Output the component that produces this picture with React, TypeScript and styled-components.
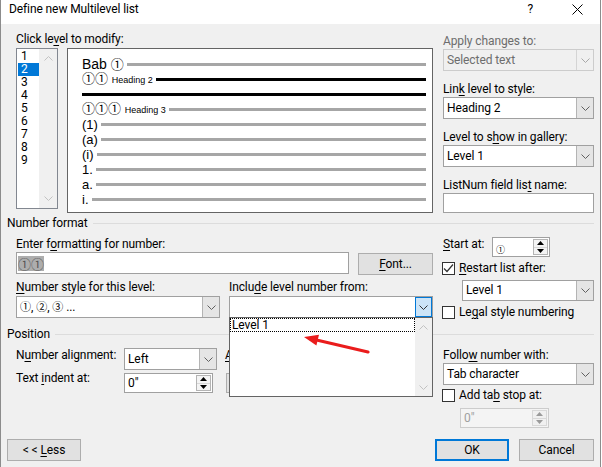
import styled, { createGlobalStyle } from 'styled-components'

const UI_FONT = 'Roboto, "Liberation Sans", Arial, sans-serif'
const DOC_FONT = '"Liberation Sans", Arial, sans-serif'
const SYM_FONT = '"Noto Sans CJK JP", "DejaVu Sans", sans-serif'

const GlobalStyle = createGlobalStyle`
	html, body {
		margin: 0;
		padding: 0;
		background: #ffffff;
	}
	body {
		font-family: ${UI_FONT};
		font-size: 12px;
		letter-spacing: -0.1px;
		color: #000;
	}
	* {
		box-sizing: border-box;
	}
`

// little drawings used by the controls
const Chevron = ({ up, color = '#606060' }: { up?: boolean; color?: string }) => (
	<svg width="9" height="5" viewBox="0 0 9 5">
		<path
			d={up ? 'M0.5 4.5 L4.5 0.5 L8.5 4.5' : 'M0.5 0.5 L4.5 4.5 L8.5 0.5'}
			fill="none"
			stroke={color}
			strokeWidth="1"
		/>
	</svg>
)

const Tri = ({ up, color = '#000' }: { up?: boolean; color?: string }) => (
	<svg width="7" height="4" viewBox="0 0 7 4">
		<path d={up ? 'M0 4 L3.5 0 L7 4 Z' : 'M0 0 L3.5 4 L7 0 Z'} fill={color} />
	</svg>
)

const Tick = () => (
	<svg width="11" height="11" viewBox="0 0 11 11">
		<path d="M1 5.5 L4 8.5 L10 1.5" fill="none" stroke="#333" strokeWidth="1.2" />
	</svg>
)

const CloseGlyph = () => (
	<CloseSvg width="11" height="11" viewBox="0 0 11 11">
		<path d="M0.5 0.5 L10.5 10.5 M10.5 0.5 L0.5 10.5" stroke="#000" strokeWidth="1" />
	</CloseSvg>
)

const levels = ['1', '2', '3', '4', '5', '6', '7', '8', '9']

const GRAY_RULE = '#a6a6a6'

const App = () => {
	return (
		<>
			<GlobalStyle />
			<Window>
				<TitleBar>
					<Title>Define new Multilevel list</Title>
					<Help>?</Help>
					<CloseGlyph />
				</TitleBar>
				<Body>
					<Section>
						<LeftPart>
							<Label>
								Click le<Key>v</Key>el to modify:
							</Label>
							<LevelRow>
								<LevelList>
									<LevelItems>
										{levels.map((l) => (
											<LevelItem key={l} $selected={l === '2'}>
												{l}
											</LevelItem>
										))}
									</LevelItems>
									<LevelScroll>
										<Chevron up color="#c2c2c2" />
										<Chevron color="#c2c2c2" />
									</LevelScroll>
								</LevelList>
								<Preview>
									<PreviewRow>
										<PreviewText $size={14}>
											Bab <Sym $size={13}>①</Sym>
										</PreviewText>
										<Rule $color={GRAY_RULE} />
									</PreviewRow>
									<PreviewRow>
										<PreviewText>
											<Sym $size={13}>①①</Sym> <Small>Heading 2</Small>
										</PreviewText>
										<Rule $color="#000" />
									</PreviewRow>
									<PreviewRow>
										<Rule $color="#000" $flush />
									</PreviewRow>
									<PreviewRow>
										<PreviewText>
											<Sym $size={13}>①①①</Sym> <Small>Heading 3</Small>
										</PreviewText>
										<Rule $color={GRAY_RULE} />
									</PreviewRow>
									{['(1)', '(a)', '(i)', '1.', 'a.', 'i.'].map((t) => (
										<PreviewRow key={t}>
											<PreviewText>{t}</PreviewText>
											<Rule $color={GRAY_RULE} />
										</PreviewRow>
									))}
								</Preview>
							</LevelRow>
						</LeftPart>
						<RightColumn $top={2} $gap={11}>
							<Field>
								<Label $disabled>Apply changes to:</Label>
								<ComboBox $disabled>
									<ComboText>Selected text</ComboText>
									<ComboButton $disabled>
										<Chevron color="#a8a8a8" />
									</ComboButton>
								</ComboBox>
							</Field>
							<Field>
								<Label>
									Lin<Key>k</Key> level to style:
								</Label>
								<ComboBox>
									<ComboText>Heading 2</ComboText>
									<ComboButton>
										<Chevron />
									</ComboButton>
								</ComboBox>
							</Field>
							<Field>
								<Label>
									Level to s<Key>h</Key>ow in gallery:
								</Label>
								<ComboBox>
									<ComboText>Level 1</ComboText>
									<ComboButton>
										<Chevron />
									</ComboButton>
								</ComboBox>
							</Field>
							<Field>
								<Label>
									ListNum field lis<Key>t</Key> name:
								</Label>
								<TextBox $h={20} />
							</Field>
						</RightColumn>
					</Section>

					<GroupHeader $top={3}>
						<GroupTitle>Number format</GroupTitle>
						<GroupLine />
					</GroupHeader>

					<Section $top={6}>
						<LeftPart>
							<Label>
								Enter f<Key>o</Key>rmatting for number:
							</Label>
							<InlineRow $gap={9}>
								<TextBox $w={333}>
									<Selected>
										<Sym $size={13}>①①</Sym>
									</Selected>
								</TextBox>
								<PushButton $w={75} $top={1}>
									<Key>F</Key>ont...
								</PushButton>
							</InlineRow>
							<InlineRow $gap={9} $top={5}>
								<Field $w={204}>
									<Label>
										<Key>N</Key>umber style for this level:
									</Label>
									<ComboBox $top={1}>
										<ComboText>
											<Sym $size={11}>①</Sym>, <Sym $size={11}>②</Sym>,{' '}
											<Sym $size={11}>③</Sym> ...
										</ComboText>
										<ComboButton>
											<Chevron />
										</ComboButton>
									</ComboBox>
								</Field>
								<Field $w={204}>
									<Label>
										Inclu<Key>d</Key>e level number from:
									</Label>
									<ComboAnchor>
										<ComboBox $top={1}>
											<ComboText />
											<ComboButton $active>
												<Chevron color="#333" />
											</ComboButton>
										</ComboBox>
										<DropList>
											<DropItems>
												<DropItem>Level 1</DropItem>
											</DropItems>
											<DropScroll>
												<Chevron up color="#c2c2c2" />
												<Chevron color="#c2c2c2" />
											</DropScroll>
											<ArrowSvg width="204" height="80" viewBox="0 0 204 80">
												<path
													d="M139 35 L88.6 23.2"
													stroke="#ea1c1c"
													strokeWidth="3"
													strokeLinecap="round"
												/>
												<path d="M75 20 L90 17.8 L87.4 28.6 Z" fill="#ea1c1c" />
											</ArrowSvg>
										</DropList>
									</ComboAnchor>
								</Field>
							</InlineRow>
						</LeftPart>
						<RightColumn>
							<InlineRow>
								<RowLabel $w={49}>
									<Key>S</Key>tart at:
								</RowLabel>
								<SpinBox $w={58}>
									<SpinValue $low>
										<Sym $size={9}>①</Sym>
									</SpinValue>
									<SpinButtons>
										<SpinHalf>
											<Tri up />
										</SpinHalf>
										<SpinHalf>
											<Tri />
										</SpinHalf>
									</SpinButtons>
								</SpinBox>
							</InlineRow>
							<CheckRow $top={5}>
								<CheckBox>
									<Tick />
								</CheckBox>
								<CheckLabel>
									<Key>R</Key>estart list after:
								</CheckLabel>
							</CheckRow>
							<ComboBox $w={132} $h={21} $top={5} $left={19}>
								<ComboText>Level 1</ComboText>
								<ComboButton>
									<Chevron />
								</ComboButton>
							</ComboBox>
							<CheckRow $top={5}>
								<CheckBox />
								<CheckLabel>
									Le<Key>g</Key>al style numbering
								</CheckLabel>
							</CheckRow>
						</RightColumn>
					</Section>

					<GroupHeader $top={8}>
						<GroupTitle>Position</GroupTitle>
						<GroupLine />
					</GroupHeader>

					<Section $top={6}>
						<LeftPart>
							<InlineRow>
								<RowLabel $w={108}>
									N<Key>u</Key>mber alignment:
								</RowLabel>
								<ComboBox $w={93}>
									<ComboText>Left</ComboText>
									<ComboButton>
										<Chevron />
									</ComboButton>
								</ComboBox>
								<RowLabel $left={8} $w={70}>
									<Key>A</Key>ligned at:
								</RowLabel>
								<TextBox $w={89} $h={20}>
									<SpinValue>0"</SpinValue>
								</TextBox>
							</InlineRow>
							<InlineRow $top={3}>
								<RowLabel $w={108} $shift={-2}>
									Text <Key>i</Key>ndent at:
								</RowLabel>
								<SpinBox $w={89}>
									<SpinValue>0"</SpinValue>
									<SpinButtons>
										<SpinHalf>
											<Tri up />
										</SpinHalf>
										<SpinHalf>
											<Tri />
										</SpinHalf>
									</SpinButtons>
								</SpinBox>
								<PushButton $w={130} $h={20} $left={13}>
									Set for All Levels...
								</PushButton>
							</InlineRow>
						</LeftPart>
						<RightColumn>
							<Label>
								Follo<Key>w</Key> number with:
							</Label>
							<ComboBox>
								<ComboText>Tab character</ComboText>
								<ComboButton>
									<Chevron />
								</ComboButton>
							</ComboBox>
							<CheckRow $top={4}>
								<CheckBox />
								<CheckLabel>
									Add ta<Key>b</Key> stop at:
								</CheckLabel>
							</CheckRow>
							<SpinBox $w={89} $top={6} $left={17} $disabled>
								<SpinValue>0"</SpinValue>
								<SpinButtons $disabled>
									<SpinHalf $disabled>
										<Tri up color="#9a9a9a" />
									</SpinHalf>
									<SpinHalf $disabled>
										<Tri color="#9a9a9a" />
									</SpinHalf>
								</SpinButtons>
							</SpinBox>
						</RightColumn>
					</Section>

					<Footer>
						<PushButton $w={74}>
							&lt; &lt; <Key>L</Key>ess
						</PushButton>
						<FooterSpacer />
						<PushButton $w={74} $default>
							OK
						</PushButton>
						<PushButton $w={75}>Cancel</PushButton>
					</Footer>
				</Body>
			</Window>
		</>
	)
}

export default App

const Window = styled.div`
	position: relative;
	width: 601px;
	height: 467px;
	border-left: 1px solid #8c8c8c;
	border-right: 1px solid #8c8c8c;
	background: #f0f0f0;
	overflow: hidden;
`

const TitleBar = styled.div`
	display: flex;
	align-items: flex-start;
	height: 24px;
	padding: 2px 17px 0 8px;
	background: #ffffff;
`

const Title = styled.div`
	flex: 1;
	line-height: 15px;
	white-space: nowrap;
`

const Help = styled.div`
	line-height: 15px;
	margin-right: 39px;
`

const CloseSvg = styled.svg`
	margin-top: 2px;
`

const Body = styled.div`
	display: flex;
	flex-direction: column;
	padding: 8px 6px 0 6px;
`

const Section = styled.div<{ $top?: number }>`
	display: flex;
	gap: 10px;
	margin-top: ${(p) => p.$top ?? 0}px;
`

const LeftPart = styled.div`
	display: flex;
	flex-direction: column;
	width: 417px;
	margin-left: 9px;
`

const RightColumn = styled.div<{ $top?: number; $gap?: number }>`
	display: flex;
	flex-direction: column;
	align-items: flex-start;
	width: 151px;
	padding-top: ${(p) => p.$top ?? 0}px;
	gap: ${(p) => p.$gap ?? 0}px;

	& > * {
		flex: none;
	}
`

const Field = styled.div<{ $w?: number }>`
	display: flex;
	flex-direction: column;
	width: ${(p) => (p.$w ? `${p.$w}px` : '100%')};
`

const Label = styled.div<{ $disabled?: boolean }>`
	height: 15px;
	line-height: 15px;
	white-space: nowrap;
	color: ${(p) => (p.$disabled ? '#6d6d6d' : '#000')};
`

const RowLabel = styled.div<{ $w: number; $left?: number; $shift?: number }>`
	flex: none;
	width: ${(p) => p.$w}px;
	margin-left: ${(p) => p.$left ?? 0}px;
	margin-top: ${(p) => p.$shift ?? 0}px;
	line-height: 15px;
	white-space: nowrap;
`

const Key = styled.span`
	text-decoration: underline;
	text-underline-offset: 2px;
`

const Sym = styled.span<{ $size: number }>`
	display: inline-block;
	font-family: ${SYM_FONT};
	font-size: ${(p) => p.$size}px;
	line-height: 1;
	letter-spacing: 0;
`

const InlineRow = styled.div<{ $gap?: number; $top?: number }>`
	display: flex;
	align-items: flex-start;
	gap: ${(p) => p.$gap ?? 0}px;
	margin-top: ${(p) => p.$top ?? 0}px;
`

const LevelRow = styled.div`
	display: flex;
	align-items: flex-start;
	gap: 9px;
	margin-top: 1px;
`

const LevelList = styled.div`
	display: flex;
	width: 42px;
	height: 161px;
	border: 1px solid #828790;
	background: #ffffff;
`

const LevelItems = styled.div`
	width: 22px;
	padding: 1px 0 0 1px;
`

const LevelItem = styled.div<{ $selected?: boolean }>`
	height: 13px;
	line-height: 13px;
	padding-left: 3px;
	background: ${(p) => (p.$selected ? '#0078d7' : 'transparent')};
	color: ${(p) => (p.$selected ? '#ffffff' : '#000')};
`

const LevelScroll = styled.div`
	display: flex;
	flex-direction: column;
	align-items: center;
	justify-content: space-between;
	width: 18px;
	padding: 7px 0;
	background: #f0f0f0;
`

const Preview = styled.div`
	display: flex;
	flex-direction: column;
	width: 366px;
	height: 165px;
	padding: 8px 6px 0 14px;
	border: 1px solid #646464;
	background: #ffffff;
	font-family: ${DOC_FONT};
	font-size: 13px;
	letter-spacing: 0;
`

const PreviewRow = styled.div`
	display: flex;
	align-items: center;
	height: 15px;
`

const PreviewText = styled.div<{ $size?: number }>`
	white-space: nowrap;
	font-size: ${(p) => p.$size ?? 13}px;
	line-height: 15px;
`

const Small = styled.span`
	font-size: 9px;
`

const Rule = styled.div<{ $color: string; $flush?: boolean }>`
	flex: 1;
	height: 3px;
	margin-left: ${(p) => (p.$flush ? 0 : 3)}px;
	background: ${(p) => p.$color};
`

const ComboBox = styled.div<{
	$w?: number
	$h?: number
	$top?: number
	$left?: number
	$disabled?: boolean
}>`
	display: flex;
	width: ${(p) => (p.$w ? `${p.$w}px` : '100%')};
	height: ${(p) => p.$h ?? 22}px;
	margin-top: ${(p) => p.$top ?? 0}px;
	margin-left: ${(p) => p.$left ?? 0}px;
	border: 1px solid ${(p) => (p.$disabled ? '#cccccc' : '#a0a0a0')};
	background: ${(p) => (p.$disabled ? '#f0f0f0' : '#ffffff')};
	color: ${(p) => (p.$disabled ? '#6d6d6d' : '#000')};
`

const ComboText = styled.div`
	flex: 1;
	align-self: center;
	padding-left: 3px;
	line-height: 15px;
	white-space: nowrap;
`

const ComboButton = styled.div<{ $active?: boolean; $disabled?: boolean }>`
	display: flex;
	align-items: center;
	justify-content: center;
	width: 17px;
	border: ${(p) => (p.$active ? '1px solid #0078d7' : 'none')};
	border-left: 1px solid
		${(p) => (p.$active ? '#0078d7' : p.$disabled ? '#d4d4d4' : '#b4b4b4')};
	background: ${(p) => (p.$active ? '#cce4f7' : p.$disabled ? '#f0f0f0' : '#e5e5e5')};
`

const ComboAnchor = styled.div`
	position: relative;
`

const DropList = styled.div`
	position: absolute;
	top: calc(100% - 1px);
	left: 0;
	z-index: 5;
	display: flex;
	width: 204px;
	height: 80px;
	border: 1px solid #646464;
	background: #ffffff;
`

const DropItems = styled.div`
	flex: 1;
`

const DropItem = styled.div`
	height: 14px;
	line-height: 12px;
	padding-left: 1px;
	border: 1px dotted #000;
`

const DropScroll = styled.div`
	display: flex;
	flex-direction: column;
	align-items: center;
	justify-content: space-between;
	width: 17px;
	padding: 7px 0 6px;
	background: #f0f0f0;
`

const ArrowSvg = styled.svg`
	position: absolute;
	left: -1px;
	top: -1px;
	pointer-events: none;
`

const TextBox = styled.div<{ $w?: number; $h?: number }>`
	display: flex;
	align-items: center;
	width: ${(p) => (p.$w ? `${p.$w}px` : '100%')};
	height: ${(p) => p.$h ?? 22}px;
	padding-left: 1px;
	border: 1px solid #a0a0a0;
	background: #ffffff;
`

const Selected = styled.span`
	display: inline-flex;
	align-items: center;
	height: 15px;
	background: #adadad;
	color: #555555;
`

const PushButton = styled.div<{
	$w: number
	$h?: number
	$top?: number
	$left?: number
	$default?: boolean
}>`
	flex: none;
	width: ${(p) => p.$w}px;
	height: ${(p) => p.$h ?? 22}px;
	margin-top: ${(p) => p.$top ?? 0}px;
	margin-left: ${(p) => p.$left ?? 0}px;
	border: ${(p) => (p.$default ? '2px solid #0078d7' : '1px solid #adadad')};
	background: #e1e1e1;
	text-align: center;
	line-height: ${(p) => (p.$h ?? 22) - (p.$default ? 4 : 2)}px;
	white-space: nowrap;
`

const SpinBox = styled.div<{ $w: number; $top?: number; $left?: number; $disabled?: boolean }>`
	display: flex;
	flex: none;
	width: ${(p) => p.$w}px;
	height: 20px;
	margin-top: ${(p) => p.$top ?? 0}px;
	margin-left: ${(p) => p.$left ?? 0}px;
	border: 1px solid ${(p) => (p.$disabled ? '#cccccc' : '#a0a0a0')};
	background: ${(p) => (p.$disabled ? '#f4f4f4' : '#ffffff')};
	color: ${(p) => (p.$disabled ? '#a0a0a0' : '#000')};
`

const SpinValue = styled.div<{ $low?: boolean }>`
	flex: 1;
	display: flex;
	align-items: ${(p) => (p.$low ? 'flex-end' : 'center')};
	padding: ${(p) => (p.$low ? '0 0 2px 3px' : '0 0 0 3px')};
`

const SpinButtons = styled.div<{ $disabled?: boolean }>`
	display: flex;
	flex-direction: column;
	width: 15px;
	margin: 1px 1px 1px 0;
	border: 1px solid ${(p) => (p.$disabled ? '#d8d8d8' : '#b4b4b4')};
`

const SpinHalf = styled.div<{ $disabled?: boolean }>`
	flex: 1;
	display: flex;
	align-items: center;
	justify-content: center;
	background: ${(p) => (p.$disabled ? '#f0f0f0' : '#f4f4f4')};

	& + & {
		border-top: 1px solid ${(p) => (p.$disabled ? '#d8d8d8' : '#b4b4b4')};
	}
`

const CheckRow = styled.div<{ $top?: number }>`
	display: flex;
	align-items: center;
	height: 13px;
	margin-top: ${(p) => p.$top ?? 0}px;
	margin-left: -1px;
`

const CheckBox = styled.div`
	display: flex;
	align-items: center;
	justify-content: center;
	flex: none;
	width: 13px;
	height: 13px;
	border: 1px solid #333333;
	background: #ffffff;
`

const CheckLabel = styled.div`
	margin-left: 4px;
	line-height: 15px;
	white-space: nowrap;
`

const GroupHeader = styled.div<{ $top: number }>`
	display: flex;
	align-items: center;
	height: 15px;
	margin-top: ${(p) => p.$top}px;
`

const GroupTitle = styled.div`
	line-height: 15px;
	white-space: nowrap;
`

const GroupLine = styled.div`
	flex: 1;
	margin-left: 5px;
	border-top: 1px solid #dcdcdc;
`

const Footer = styled.div`
	display: flex;
	gap: 10px;
	margin-top: 11px;
`

const FooterSpacer = styled.div`
	flex: 1;
`
